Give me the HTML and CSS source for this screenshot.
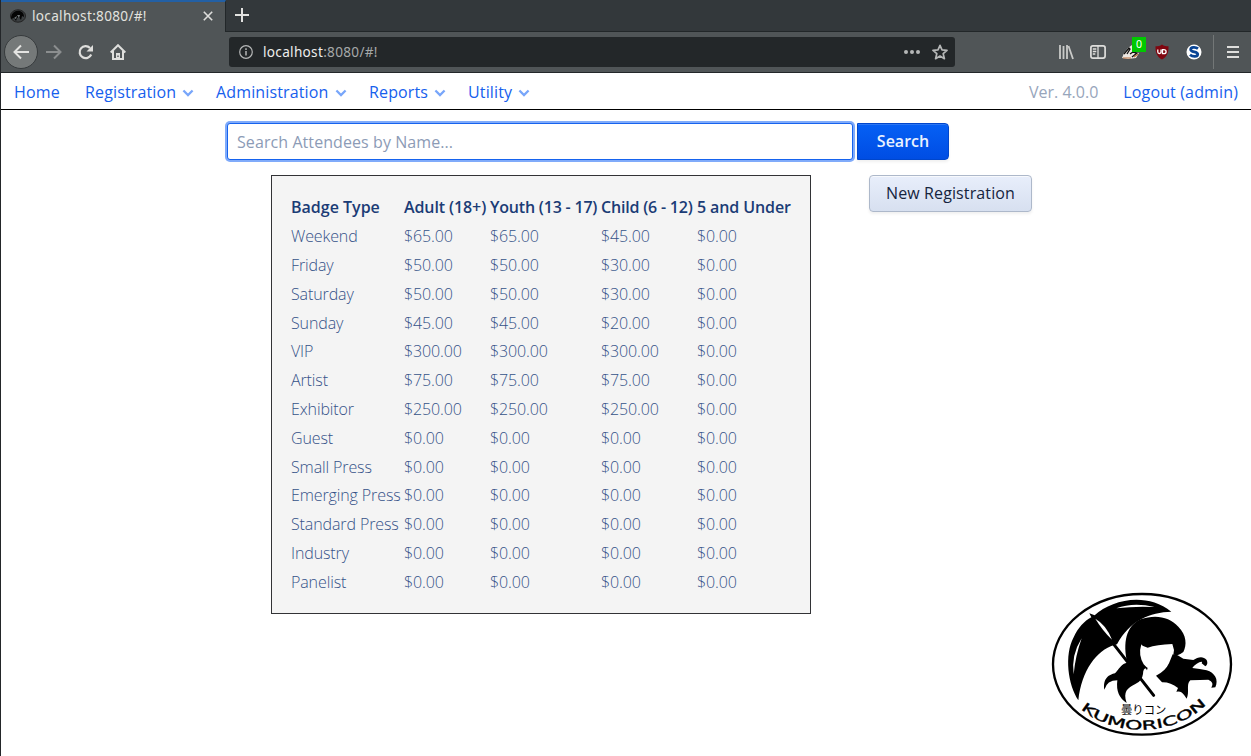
FILE: index.html
```html
<!DOCTYPE html>
<html lang="en">
<head>
<meta charset="utf-8">
<title>localhost:8080/#!</title>
<link rel="stylesheet" href="styles.css">
</head>
<body>
<div class="window">
  <div class="tabs">
    <div class="tab">
      <svg class="favicon" width="16" height="14" viewBox="0 0 16 14"><ellipse cx="8" cy="7" rx="7.5" ry="6.2" fill="#3b3f41" stroke="#222"/><path d="M1 10C1 4 5 1 10 2c3 1 4 3 4 6l-2-1-1 4-2-3-2 1-1 3-2-3z" fill="#050505"/><path d="M7 6l3 0-1 3zM4 9l3-2-1 3z" fill="#73797b"/></svg>
      <span class="tab-title">localhost:8080/#!</span>
      <svg class="close" width="10" height="10" viewBox="0 0 10 10"><path d="M.8.8l8.4 8.4M9.2.8L.8 9.2" stroke="#dededc" stroke-width="1.6"/></svg>
    </div>
    <div class="newtab"><svg width="14" height="14" viewBox="0 0 14 14"><path d="M7 0v14M0 7h14" stroke="#e2e2e0" stroke-width="2"/></svg></div>
  </div>
  <div class="toolbar">
    <div class="back"><svg width="16" height="16" viewBox="0 0 16 16"><path d="M16 8H1.5M8 1.5L1.5 8 8 14.500" fill="none" stroke="#e4e4e2" stroke-width="2"/></svg></div>
    <svg class="forward" width="16" height="16" viewBox="0 0 16 16"><path d="M0 8h14.500M8 1.500L14.500 8 8 14.500" fill="none" stroke="#8b8e8f" stroke-width="2"/></svg>
    <svg class="reload" width="16" height="16" viewBox="0 0 16 16"><path d="M13.200 10.500A6 6 0 1 1 12 4" fill="none" stroke="#dededc" stroke-width="2.200"/><path d="M15 1v6.500H8.500z" fill="#dededc"/></svg>
    <svg class="home" width="16" height="16" viewBox="0 0 16 16"><path d="M.7 8.500L8 1.200l7.300 7.300M3 7v8h10V7" fill="none" stroke="#dededc" stroke-width="2"/><path d="M6 9h4v6H6z" fill="#dededc"/><path d="M7.300 11.500h1.400V13H7.300z" fill="#505557"/></svg>
    <div class="address">
      <svg width="14" height="14" viewBox="0 0 14 14"><circle cx="7" cy="7" r="6.300" fill="none" stroke="#b5b7b7" stroke-width="1.200"/><path d="M7 6v4.500M7 3.300v1.600" stroke="#b5b7b7" stroke-width="1.500"/></svg>
      <span class="url">localhost<span class="url-dim">:8080/#!</span></span>
      <svg class="dots" width="16" height="4" viewBox="0 0 16 4"><g fill="#b5b7b7"><circle cx="2" cy="2" r="2"/><circle cx="8" cy="2" r="2"/><circle cx="14" cy="2" r="2"/></g></svg>
      <svg class="star" width="16" height="16" viewBox="0 0 16 16"><path d="M8 1.300l2 4.600 5 .5-3.800 3.300 1.200 5L8 12.100l-4.400 2.600 1.200-5L1 6.400l5-.5z" fill="none" stroke="#b5b7b7" stroke-width="1.700" stroke-linejoin="round"/></svg>
    </div>
    <div class="extensions">
      <svg width="16" height="16" viewBox="0 0 16 16"><path d="M2 1v14M5.500 2v13M9 1v14M10.500 2l4.500 13" stroke="#c9cac8" stroke-width="1.800" fill="none"/></svg>
      <svg width="16" height="16" viewBox="0 0 16 16"><rect x=".9" y="1.900" width="14.200" height="12.200" rx="2" fill="none" stroke="#dededc" stroke-width="1.700"/><path d="M8 2v12M2.800 5h3.500M2.800 7.500h3.500M2.800 10h2.500" stroke="#dededc" stroke-width="1.300"/></svg>
      <div class="badger">
        <svg width="18" height="16" viewBox="0 0 18 16"><path d="M0 14l2-5 4-5 4-3 1 6 6 2-3 5-8 1z" fill="#eee8e2"/><path d="M2 10l5-6 1 1-3 5M8 10l3-2 4 1-5 4" fill="none" stroke="#111" stroke-width="1.300"/><path d="M1 14h8M12 13l4-3" stroke="#bc713e" stroke-width="1.200"/></svg>
        <span class="count">0</span>
      </div>
      <svg width="16" height="16" viewBox="0 0 16 16"><path d="M8 .5c2 1.500 4 1.700 6.500 1.700C14.700 9 13 12.500 8 15.500 3 12.500 1.300 9 1.500 2.200 4 2.200 6 2 8 .5z" fill="#800610"/><path d="M3.800 5.500V8c0 2 3.200 2 3.200 0V5.500M8.500 5.700h1.200c3.200 0 3.200 4 0 4H8.500z" fill="none" stroke="#fff" stroke-width="1.300"/></svg>
      <svg width="16" height="16" viewBox="0 0 16 16"><circle cx="8" cy="8" r="7.500" fill="#fff"/><path d="M12 4.700C9.500 2.700 4.700 3 4.700 5.500c0 3.300 7 1.500 7 4.700 0 3-5.200 2.800-7.700.6" fill="none" stroke="#0a4595" stroke-width="2.800"/></svg>
      <span class="divider"></span>
      <svg class="burger" width="12" height="12" viewBox="0 0 12 12"><path d="M0 1h12M0 6h12M0 11h12" stroke="#dededc" stroke-width="2"/></svg>
    </div>
  </div>
  <nav class="menu">
    <a class="home-link">Home</a>
    <a class="registration">Registration<svg class="chev" viewBox="0 0 10 7"><path d="M1 1.300l4 4 4-4"/></svg></a>
    <a class="administration">Administration<svg class="chev" viewBox="0 0 10 7"><path d="M1 1.300l4 4 4-4"/></svg></a>
    <a class="reports">Reports<svg class="chev" viewBox="0 0 10 7"><path d="M1 1.300l4 4 4-4"/></svg></a>
    <a class="utility">Utility<svg class="chev" viewBox="0 0 10 7"><path d="M1 1.300l4 4 4-4"/></svg></a>
    <span class="version">Ver. 4.0.0</span>
    <a>Logout (admin)</a>
  </nav>
  <div class="search">
    <input class="field" type="text" placeholder="Search Attendees by Name...">
    <button class="btn primary">Search</button>
  </div>
  <main class="content">
    <section class="prices">
      <b>Badge Type</b><b>Adult (18+)</b><b>Youth (13 - 17)</b><b>Child (6 - 12)</b><b>5 and Under</b>
      <span>Weekend</span><span>$65.00</span><span>$65.00</span><span>$45.00</span><span>$0.00</span>
      <span>Friday</span><span>$50.00</span><span>$50.00</span><span>$30.00</span><span>$0.00</span>
      <span>Saturday</span><span>$50.00</span><span>$50.00</span><span>$30.00</span><span>$0.00</span>
      <span>Sunday</span><span>$45.00</span><span>$45.00</span><span>$20.00</span><span>$0.00</span>
      <span>VIP</span><span>$300.00</span><span>$300.00</span><span>$300.00</span><span>$0.00</span>
      <span>Artist</span><span>$75.00</span><span>$75.00</span><span>$75.00</span><span>$0.00</span>
      <span>Exhibitor</span><span>$250.00</span><span>$250.00</span><span>$250.00</span><span>$0.00</span>
      <span>Guest</span><span>$0.00</span><span>$0.00</span><span>$0.00</span><span>$0.00</span>
      <span>Small Press</span><span>$0.00</span><span>$0.00</span><span>$0.00</span><span>$0.00</span>
      <span>Emerging Press</span><span>$0.00</span><span>$0.00</span><span>$0.00</span><span>$0.00</span>
      <span>Standard Press</span><span>$0.00</span><span>$0.00</span><span>$0.00</span><span>$0.00</span>
      <span>Industry</span><span>$0.00</span><span>$0.00</span><span>$0.00</span><span>$0.00</span>
      <span>Panelist</span><span>$0.00</span><span>$0.00</span><span>$0.00</span><span>$0.00</span>
    </section>
    <aside class="side">
      <button class="btn">New Registration</button>
      <svg class="logo" width="211" height="160" viewBox="0 0 633 480">
        <ellipse cx="306" cy="238" rx="267" ry="211" fill="#fff" stroke="#000" stroke-width="7"/>
        <!-- umbrella canopy -->
        <path d="M115 346C84 300 72 210 101 157C114 128 133 108 154 97L148 85L164 91C215 43 320 20 394 80C330 82 270 105 231 178L222 180C170 197 125 255 115 346Z"/>
        <path d="M101 268Q93 210 125 160Q106 213 101 268Z" fill="#fff"/>
        <path d="M229 70Q280 50 344 66Q285 63 229 70Z" fill="#fff"/>
        <path d="M166 101Q199 120 216 164Q187 136 166 101Z" fill="#fff"/>
        <path d="M222 179L341 331" fill="none" stroke="#000" stroke-width="9" stroke-linecap="round"/>
        <!-- hair -->
        <path d="M262 233C248 175 258 122 302 103C345 87 389 95 415 125C440 150 441 180 430 201Q421 208 412 211L400 209L402 195L397 177Q350 179 323 188Q306 184 304 178Q294 210 311 238L322 249Q309 247 309 267Q306 289 286 297C263 308 248 320 260 354Q226 333 232 286Q201 286 193 314C188 278 209 269 225 265C237 252 245 235 262 233Z"/>
        <path d="M398 208L413 211L430 221L460 225C474 216 489 212 500 225C504 233 502 241 496 244L485 235Q490 228 478 232Q461 242 457 249Q480 252 500 256C524 263 537 284 526 307L514 308Q524 291 505 284Q481 284 451 286C437 299 450 321 440 341L434 332Q424 316 409 320L414 309Q391 291 366 292L348 272Q376 259 387 235Z"/>
        <path d="M323 248l-2 8-5-8z"/>
        <text class="logo-jp" x="243" y="386" textLength="136">曇りコン</text>
        <path id="arc" d="M122 371A245 192 0 0 0 516 338" fill="none"/>
        <text class="logo-name"><textPath href="#arc" textLength="412" lengthAdjust="spacingAndGlyphs">KUMORICON</textPath></text>
      </svg>
    </aside>
  </main>
</div>
</body>
</html>
```
FILE: styles.css
```css
* { box-sizing: border-box; }
body { margin: 0; background: #fff; font: 16px/20px "Open Sans", "Noto Sans", sans-serif; }
svg { display: block; flex: none; }
.window { width: 1251px; height: 756px; display: flex; flex-direction: column; border-left: 1px solid #232629; overflow: hidden; }
.tabs { height: 32px; display: flex; background: #33383b; flex: none; }
.tab { width: 225px; display: flex; align-items: center; padding: 0 12px 2px 9px; background: #505557; border-top: 2px solid #2360a5; border-right: 1px solid #222729; }
.tab-title { margin-left: 6px; font: 13.6px/18px "Noto Sans", sans-serif; letter-spacing: .3px; color: #e2e2df; }
.close { margin-left: auto; }
.newtab { flex: 1; padding: 8px 9px; border-bottom: 1px solid #222729; }
.toolbar { height: 41px; flex: none; display: flex; align-items: center; background: #505557; border-bottom: 1px solid #222729; padding-left: 3px; }
.back { width: 34px; height: 34px; border-radius: 50%; display: grid; place-items: center; background: #757979; border: 1px solid #373b3d; }
.forward { margin-left: 8px; }
.reload, .home { margin-left: 16px; }
.address { margin-left: 103px; width: 726px; height: 30px; background: #232729; border-radius: 3px; display: flex; align-items: center; padding: 0 7px 0 10px; }
.url { margin-left: 10px; font: 13.6px/18px "Noto Sans", sans-serif; letter-spacing: .3px; color: #eeeeec; }
.url-dim { color: #a6a9a9; }
.dots { margin-left: auto; margin-right: 12px; }
.extensions { display: flex; align-items: center; gap: 16px; margin-left: 103px; }
.badger { width: 16px; height: 16px; position: relative; }
.count { position: absolute; left: 10px; top: -7px; width: 14px; height: 15px; background: #00c900; color: #fff; font: 10.5px/14px "Noto Sans", sans-serif; text-align: center; }
.divider { width: 1px; height: 34px; background: #737777; margin-left: -5px; }
.burger { margin-left: -3px; }
.menu { height: 37px; flex: none; display: flex; align-items: center; border-bottom: 1px solid #000; padding: 2px 13px 0 13px; color: #1660ed; letter-spacing: .14px; white-space: nowrap; }
.menu a { display: flex; align-items: center; }
.chev { width: 12px; height: 8px; margin-left: 6px; margin-top: 2px; fill: none; stroke: #78a6fa; stroke-width: 2; }
.home-link { width: 71px; }
.registration { width: 131px; }
.administration { width: 153px; }
.reports { width: 99px; }
.version { margin-left: auto; margin-right: 25px; color: #97a5bb; letter-spacing: 0; }
.search { display: flex; padding: 13px 0 0 226px; height: 65px; gap: 4px; flex: none; }
.field { width: 626px; height: 37px; border: 1px solid #1663ee; border-radius: 3px; outline: 0; box-shadow: 0 0 0 2px #80abfa; padding: 1px 9px 0; font: 16px "Open Sans", sans-serif; letter-spacing: .08px; }
.field::placeholder { color: #8c9bb6; opacity: 1; }
.btn { height: 37px; width: 163px; padding: 0 0 2px; border: 1px solid #adb8ca; border-radius: 4px; background: linear-gradient(#e8eefb, #d7e0f0); box-shadow: inset 0 1px #f7f9fd, 0 2px 3px #00000010; color: #15243e; font: 16px "Open Sans", sans-serif; letter-spacing: .12px; }
.primary { width: 92px; border-color: #0046cc; border-radius: 0 4px 4px 0; background: linear-gradient(#0560f5, #004de3); box-shadow: inset 0 1px #2c76f3, 0 2px 3px #00000010; color: #eaf2ff; font-weight: 600; letter-spacing: 0; }
.content { display: flex; padding-left: 270px; gap: 58px; flex: 1; }
.prices { width: 540px; height: 439px; background: #f4f4f4; border: 1px solid #323336; padding: 17.4px 0 0 19px; display: grid; grid-template-columns: 113px 86px 111px 96px 1fr; grid-auto-rows: 28.8px; line-height: 28.8px; color: #355288; font-weight: 300; letter-spacing: -.11px; white-space: nowrap; }
.prices b { color: #1b3c76; font-weight: 600; letter-spacing: -.2px; }
.prices b:first-child { letter-spacing: 0; }
.prices b:nth-child(2), .prices b:nth-child(5) { letter-spacing: -.1px; }
.side { flex: 1; display: flex; flex-direction: column; justify-content: space-between; }
.logo { align-self: flex-end; margin-bottom: 11px; }
.logo-jp { font: 34px "Noto Sans CJK JP", sans-serif; }
.logo-name { font: 38px "DejaVu Sans", sans-serif; stroke: #000; stroke-width: 1; }
```
